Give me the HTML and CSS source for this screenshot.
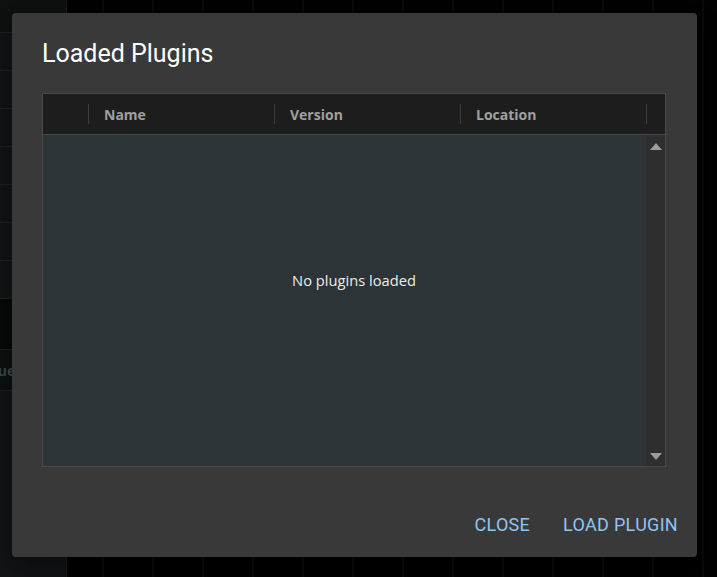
FILE: index.html
```html
<!DOCTYPE html>
<html>
<head>
<meta charset="utf-8">
<link rel="stylesheet" href="styles.css">
</head>
<body>
<div class="app">
  <aside class="side">
    <div class="side-top"></div>
    <div class="side-row"></div>
    <div class="side-row"></div>
    <div class="side-row"></div>
    <div class="side-row"></div>
    <div class="side-row"></div>
    <div class="side-row"></div>
    <div class="side-row"></div>
    <div class="side-band"></div>
    <div class="side-row label-row"><span class="side-label">Value</span></div>
    <div class="side-rest"></div>
  </aside>
  <main class="canvas"></main>
</div>

<div class="dialog" role="dialog" aria-labelledby="dlg-title">
  <h2 class="dialog-title" id="dlg-title">Loaded Plugins</h2>
  <div class="grid">
    <div class="grid-head">
      <div class="hcell"></div>
      <div class="hcell">Name</div>
      <div class="hcell">Version</div>
      <div class="hcell">Location</div>
      <div class="hcell-scroll"></div>
    </div>
    <div class="grid-body">
      <div class="rows"></div>
      <div class="scrollbar">
        <span class="arrow up"></span>
        <span class="arrow down"></span>
      </div>
    </div>
    <div class="empty">No plugins loaded</div>
  </div>
  <div class="actions">
    <button class="btn">CLOSE</button>
    <button class="btn">LOAD PLUGIN</button>
  </div>
</div>
</body>
</html>
```

FILE: styles.css
```css
* { box-sizing: border-box; }
html, body {
  margin: 0;
  padding: 0;
  width: 717px;
  height: 577px;
  overflow: hidden;
  background: #040404;
}
body { position: relative; font-family: Roboto, "Noto Sans", sans-serif; }

.app {
  display: flex;
  width: 717px;
  height: 577px;
}
.side {
  width: 67px;
  flex: none;
  display: flex;
  flex-direction: column;
  background: #121617;
  border-right: 1px solid #1a1c1d;
}
.side-top { height: 33px; background: #0f1010; border-bottom: 1px solid #1c1f20; }
.side-row {
  height: 38px;
  border-bottom: 1px solid #1f2324;
  display: flex;
  align-items: center;
}
.side-band { height: 51px; background: #080909; border-bottom: 1px solid #1f2324; }
.label-row { height: 41px; background: #0d1011; }
.side-label {
  font-family: "Open Sans", sans-serif;
  font-weight: 700;
  font-size: 14px;
  color: #3c4a52;
  margin-left: -24px;
}
.side-rest { flex: 1; }
.canvas {
  flex: 1;
  background-color: #030303;
  background-image: repeating-linear-gradient(90deg, transparent 0 35px, #0b0b0b 35px 37px, transparent 37px 50px);
}

.dialog {
  position: absolute;
  left: 12px;
  top: 13px;
  width: 685px;
  height: 544px;
  background: #393939;
  border-radius: 4px;
  box-shadow: 0 11px 15px -7px rgba(0,0,0,.2), 0 24px 38px 3px rgba(0,0,0,.14), 0 9px 46px 8px rgba(0,0,0,.12);
  display: flex;
  flex-direction: column;
  padding: 25px 31px 15px 30px;
}
.dialog-title {
  margin: 0;
  font-family: Roboto, sans-serif;
  font-weight: 400;
  font-size: 25px;
  line-height: 32px;
  color: #ffffff;
}
.grid {
  position: relative;
  margin-top: 23px;
  height: 374px;
  border: 1px solid #4a4a4a;
  display: flex;
  flex-direction: column;
  background: #2c3437;
}
.grid-head {
  display: grid;
  grid-template-columns: 46px 186px 186px 186px 1fr;
  height: 41px;
  background: #1d1d1d;
  border-bottom: 1px solid #4a4a4a;
}
.hcell {
  position: relative;
  display: flex;
  align-items: center;
  padding-left: 15px;
  font-family: "Open Sans", sans-serif;
  font-weight: 700;
  font-size: 14px;
  color: #a0a0a0;
}
.hcell::after {
  content: "";
  position: absolute;
  right: 0;
  top: 10px;
  bottom: 10px;
  width: 1px;
  background: #3c3c3c;
}
.grid-body {
  flex: 1;
  display: grid;
  grid-template-columns: 1fr 19px;
}
.scrollbar {
  background: #2e2e2e;
  display: flex;
  flex-direction: column;
  justify-content: space-between;
  align-items: center;
  padding: 8px 0 6px;
}
.arrow {
  width: 0;
  height: 0;
  border-left: 6px solid transparent;
  border-right: 6px solid transparent;
}
.arrow.up { border-bottom: 7px solid #9c9c9c; }
.arrow.down { border-top: 7px solid #9c9c9c; }

.empty {
  position: absolute;
  inset: 0;
  display: flex;
  align-items: center;
  justify-content: center;
  font-family: "Open Sans", sans-serif;
  font-size: 14.7px;
  color: #ececec;
  pointer-events: none;
}

.actions {
  margin-top: auto;
  display: flex;
  justify-content: flex-end;
  gap: 17px;
  margin-right: -20px;
}
.btn {
  background: none;
  border: 0;
  padding: 0 8px;
  height: 36px;
  font-family: Roboto, sans-serif;
  font-weight: 400;
  font-size: 18px;
  letter-spacing: 0.3px;
  color: #8fc5f3;
  cursor: pointer;
}
```
